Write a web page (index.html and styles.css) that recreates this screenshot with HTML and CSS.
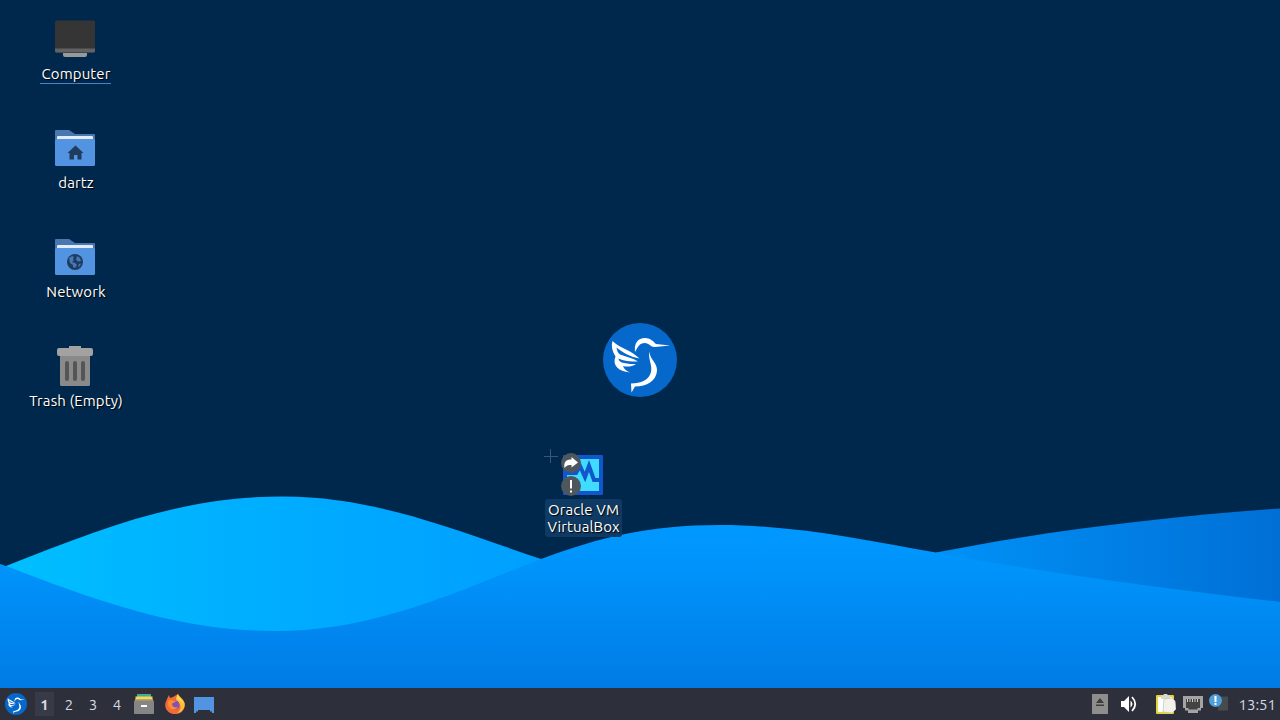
FILE: index.html
```html
<!DOCTYPE html>
<html lang="en">
<head>
    <meta charset="UTF-8">
    <meta name="viewport" content="width=device-width, initial-scale=1.0">
    <title>Desktop</title>
    <link rel="stylesheet" href="styles.css">
</head>
<body>
    <!-- Bird used by the wallpaper and the menu button -->
    <svg class="defs">
        <symbol id="bird" viewBox="0 0 74 74">
            <circle cx="37" cy="37" r="37" fill="#0668cb"/>
            <path fill="#fff" d="M32 29 C31 20 35 15 42 15 C47 15 50 18 53 21 L67 22.500 L52 24 C48 24.500 46 20 42 20 C36 20 35 24 32 29Z"/>
            <path fill="#fff" d="M46 28.500 C48 38 54.500 40 54 48 C53 58 44 63.500 32 63.500 L28.500 69.500 L28 60.500 C38 60.500 46 57 48 49 C49.500 42 45.500 38 46 28.500Z"/>
            <path fill="#fff" d="M9.500 18 C18 26 28 27 36.500 35.500 C28 34 20 30 13.500 24.500 C14 28 15 30 17 31.500 C23 34 29 34.500 35 38.500 C27 38.500 20 38 15.500 35.500 C15.500 38 18 39.500 21 40 C25 41 29 41 33 41 C29 44 23 44 20 43 C21 46 23 48 27 49.500 C15 48.500 9 42 12.500 33.500 C9 28 8 23 9.500 18Z"/>
        </symbol>
    </svg>

    <div class="desktop">
        <svg class="wallpaper" viewBox="0 0 1280 688">
            <defs>
                <linearGradient id="left" x1="6" x2="541" y1="0" y2="0" gradientUnits="userSpaceOnUse">
                    <stop offset="0" stop-color="#00bfff"/>
                    <stop offset="0.5" stop-color="#00adff"/>
                    <stop offset="1" stop-color="#009fff"/>
                </linearGradient>
                <linearGradient id="front" x1="0" x2="0" y1="525" y2="688" gradientUnits="userSpaceOnUse">
                    <stop offset="0" stop-color="#0098ff"/>
                    <stop offset="0.25" stop-color="#0094fb"/>
                    <stop offset="1" stop-color="#007be5"/>
                </linearGradient>
                <linearGradient id="right" x1="936" x2="1280" y1="0" y2="0" gradientUnits="userSpaceOnUse">
                    <stop offset="0" stop-color="#0092f8"/>
                    <stop offset="1" stop-color="#006fd5"/>
                </linearGradient>
            </defs>
            <path fill="url(#left)" d="M6 566 C100 529 180 496.500 283 496.500 C375 496.500 455 530 541 559 V688 H6Z"/>
            <path fill="url(#right)" d="M936 552.500 C1050 530 1165 517 1280 508.500 V688 H936Z"/>
            <path fill="url(#front)" d="M0 564 L6 566 C100 602 180 631 275 631 C375 631 455 592 541 559 C600 537 650 525 720 525 C795 525 865 540 936 552.500 C1050 574 1165 588 1280 602 V688 H0Z"/>
        </svg>
        <svg class="logo"><use href="#bird"/></svg>

        <div class="icons">
            <div class="item current">
                <svg viewBox="0 0 40 40">
                    <path fill="#999" d="M8 34h24v2q0 2-2 2H10q-2 0-2-2z"/>
                    <rect y="1.500" width="40" height="32" rx="1.500" fill="#353535"/>
                    <path fill="#626262" d="M0 29.500h40V32q0 1.500-1.500 1.500h-37Q0 33.500 0 32z"/>
                </svg>
                <span>Computer</span>
            </div>
            <div class="item">
                <svg viewBox="0 0 40 40">
                    <path fill="#4877b1" d="M0 3q0-1 1-1h13l6 4h19q1 0 1 1v20H0z"/>
                    <path fill="#e4ebf5" d="M2 12V9q0-1 1-1h34q1 0 1 1v3z"/>
                    <rect y="11" width="40" height="27" rx="1.500" fill="#5294e2"/>
                    <path fill="#1f3b5e" d="M20.500 17.500l8 7.500h-2v6.500h-4v-4.500H19v4.500h-4.500V25h-2z"/>
                </svg>
                <span>dartz</span>
            </div>
            <div class="item">
                <svg viewBox="0 0 40 40">
                    <path fill="#4877b1" d="M0 3q0-1 1-1h13l6 4h19q1 0 1 1v20H0z"/>
                    <path fill="#e4ebf5" d="M2 12V9q0-1 1-1h34q1 0 1 1v3z"/>
                    <rect y="11" width="40" height="27" rx="1.500" fill="#5294e2"/>
                    <circle cx="20" cy="25" r="8" fill="#1f3b5e"/>
                    <path fill="#4478b8" d="M14 21l3-2 2 1-1 2 1 1-2 2 3 1 2 2-2 3-2-1v-2l-3-2zM22 19l3 2 1 3-3 .500-2-2zM24 27l2-.500-1 2.500-2 1z"/>
                </svg>
                <span>Network</span>
            </div>
            <div class="item">
                <svg viewBox="0 0 40 40">
                    <rect x="5" y="8" width="30" height="32" rx="1.500" fill="#8a8a8a"/>
                    <path fill="#a2a2a2" d="M14 0h12v2h10q2 0 2 2v4q0 2-2 2H4q-2 0-2-2V4q0-2 2-2h10z"/>
                    <path stroke="#555" stroke-width="4" stroke-linecap="round" d="M12 17v16M20 17v16M28 17v16"/>
                </svg>
                <span>Trash (Empty)</span>
            </div>
        </div>

        <div class="item dropped">
            <svg viewBox="0 0 40 40">
                <rect width="40" height="40" rx="1" fill="#1256cc"/>
                <rect x="4" y="4" width="32" height="32" fill="#3fdcff"/>
                <path fill="none" stroke="#1256cc" stroke-width="4" d="M2 18h11l4-7 5 11 4-11 5 14h7"/>
            </svg>
            <svg class="emblem link" viewBox="0 0 20 20">
                <circle cx="10" cy="10" r="10" fill="#4d575d"/>
                <path fill="#fff" d="M3.500 15c-1-6 1.500-8.500 7-8.500V4l6.500 5.500-6.500 5v-2.500c-3.500 0-5 .5-7 3z"/>
            </svg>
            <svg class="emblem alert" viewBox="0 0 20 20">
                <circle cx="10" cy="10" r="10" fill="#4d575d"/>
                <path fill="#fff" d="M9 4h2v8.500H9zM9 14.500h2v2H9z"/>
            </svg>
            <span>Oracle VM<br>VirtualBox</span>
        </div>
        <svg class="cursor" viewBox="0 0 14 14"><path stroke="#365775" d="M6.500 0v14M0 7.500h14"/></svg>
    </div>

    <div class="panel">
        <svg class="menu"><use href="#bird"/></svg>
        <div class="pager">
            <span class="active">1</span>
            <span>2</span>
            <span>3</span>
            <span>4</span>
        </div>
        <div class="launchers">
            <svg viewBox="0 0 20 20">
                <path fill="#4ea88b" d="M3 0h14v3H3z"/>
                <path fill="#f3d668" d="M1.500 2.500h17V8h-17z"/>
                <path fill="#bba952" d="M1 5h18v2H1z"/>
                <rect y="6.500" width="20" height="13.500" rx="1" fill="#858585"/>
                <rect x="7" y="11" width="6" height="2" rx=".5" fill="#fff"/>
            </svg>
            <svg class="firefox" viewBox="0 0 20 20">
                <path fill="#f36b35" d="M2 5L4 1l1 3 3-1 5-3c0 3 5 4 6.500 9C21 15 16 20 10 20S-1 15 .500 9z"/>
                <path fill="#ffbc38" d="M13 0c1 3 5 4 6.500 9 1 5-3 10-7 10 3-3 4-6 2-9-1-3-4-3-3.500-6z"/>
                <path fill="#ffe252" d="M13 0c0 4 5 5 5 10l-2-3c-3-1-5-3-3-7z"/>
                <circle cx="10" cy="11" r="4.600" fill="#8352b5"/>
                <path fill="#ff8b32" d="M3 7c3-2 5 0 8 0-1 2-3 1-4 3 0 3 3 4 6 3-2 4-9 3-10-2z"/>
            </svg>
            <svg viewBox="0 0 20 20">
                <path fill="#5294e2" d="M0 3h20v16h-2v-1.500h-2V16H4v1.500H2V19H0z"/>
            </svg>
        </div>

        <div class="tray">
            <svg viewBox="0 0 20 20">
                <rect x="2" width="16" height="20" fill="#8e8e8e"/>
                <path fill="#3d3d3d" d="M10 4l4 5H6zM6 10.500h8V12H6z"/>
            </svg>
            <svg class="volume" viewBox="0 0 20 20">
                <path fill="#fff" d="M2 7h3l5-5v16l-5-5H2z"/>
                <path fill="#fff" d="M11.500 6.500q4 3.500 0 7z"/>
                <path fill="none" stroke="#fff" stroke-width="1.800" d="M13 3q6.500 7 0 14"/>
            </svg>
            <svg class="clipboard" viewBox="0 0 20 20">
                <rect y="1" width="18" height="19" rx="1" fill="#e8d23b"/>
                <rect x="2" y="3" width="14" height="15" fill="#fff"/>
                <path fill="#d7d8cf" d="M5 1.500h2L8 0h3l1 1.500h2V5H5z"/>
                <path fill="#f2f2ea" stroke="#c2c4b9" stroke-width=".7" d="M8 5l8-1 3 3 1 8-4 4-9-1z"/>
            </svg>
            <svg viewBox="0 0 20 20">
                <path fill="#a4a4a4" d="M0 2h20v12h-2v2.500h-3V19H5v-2.500H2V14H0z"/>
                <path fill="#434343" d="M3 5h14v9h-2.500v1.500h-9V14H3z"/>
                <path stroke="#ccc" d="M4.500 5v3M7 5v3M9.500 5v3M12 5v3M14.500 5v3"/>
            </svg>
            <svg class="updates" viewBox="0 0 20 20">
                <path fill="#454b4f" d="M9 2.500h10v14H9z"/>
                <circle cx="6.500" cy="6.500" r="6.500" fill="#4f9fda"/>
                <path fill="#fff" d="M5.500 2h2v6h-2zM5.500 9h2v2h-2z"/>
            </svg>
        </div>
        <div class="clock">13:51</div>
    </div>
</body>
</html>
```

FILE: styles.css
```css
body {
    margin: 0;
    width: 1280px;
    height: 720px;
    overflow: hidden;
    display: flex;
    flex-direction: column;
    font-family: Ubuntu, "Noto Sans", sans-serif;
    font-size: 15px;
    color: #fff;
}
svg {
    display: block;
}
.defs {
    position: absolute;
    width: 0;
    height: 0;
}
.desktop {
    position: relative;
    height: 688px;
    background-color: #00284d;
}
.wallpaper {
    position: absolute;
    left: 0;
    top: 0;
    width: 1280px;
    height: 688px;
}
.logo {
    position: absolute;
    left: 603px;
    top: 323px;
    width: 74px;
    height: 74px;
}

/* Desktop icons */
.icons {
    position: relative;
    width: 150px;
    padding-top: 19px;
}
.item {
    display: flex;
    flex-direction: column;
    align-items: center;
    text-align: center;
    letter-spacing: 0.1px;
    text-shadow: 1px 1px 1px #000;
}
.icons .item {
    height: 109px;
}
.item > svg {
    width: 40px;
    height: 40px;
    flex: none;
}
.item span {
    margin-top: 4px;
    padding: 2px 1px 1px 2px;
    line-height: 17px;
    white-space: nowrap;
}
.icons span {
    margin-left: 1px;
}
.current span {
    border-bottom: 1px solid #4384cc;
}
.dropped {
    position: absolute;
    left: 545px;
    top: 455px;
    width: 77px;
}
.dropped > svg {
    margin-right: 1px;
}
.dropped span {
    width: 77px;
    box-sizing: border-box;
    padding: 2px 0;
    background-color: #0f3a64;
    border-radius: 3px;
}
.dropped .emblem {
    position: absolute;
    left: 16px;
    width: 20px;
    height: 20px;
}
.dropped .link {
    top: -2px;
}
.dropped .alert {
    top: 21px;
}
.cursor {
    position: absolute;
    left: 544px;
    top: 449px;
    width: 14px;
    height: 14px;
}

/* Bottom panel */
.panel {
    display: flex;
    align-items: center;
    height: 32px;
    box-sizing: border-box;
    padding: 0 4px 0 5px;
    background-color: #2d303b;
    color: #d3dae3;
}
.menu {
    width: 22px;
    height: 22px;
}
.pager {
    display: flex;
    margin-left: 7px;
}
.pager span {
    width: 24px;
    line-height: 26px;
    height: 24px;
    text-align: center;
    font-size: 15px;
}
.pager span.active {
    width: 19px;
    margin-right: 3px;
    margin-left: 1px;
    background-color: #383b47;
    font-weight: bold;
}
.launchers {
    display: flex;
    gap: 10px;
    margin-left: 5px;
}
.launchers svg,
.tray svg {
    width: 20px;
    height: 20px;
}
.launchers .firefox {
    margin: 0 -1px 0 1px;
}
.tray {
    display: flex;
    gap: 8px;
    margin-left: auto;
}
.tray .volume {
    margin: 0 9px 0 1px;
}
.tray .clipboard {
    margin-right: -1px;
}
.tray .updates {
    margin-left: -2px;
}
.clock {
    margin-left: 9px;
    font-size: 15px;
}
```
